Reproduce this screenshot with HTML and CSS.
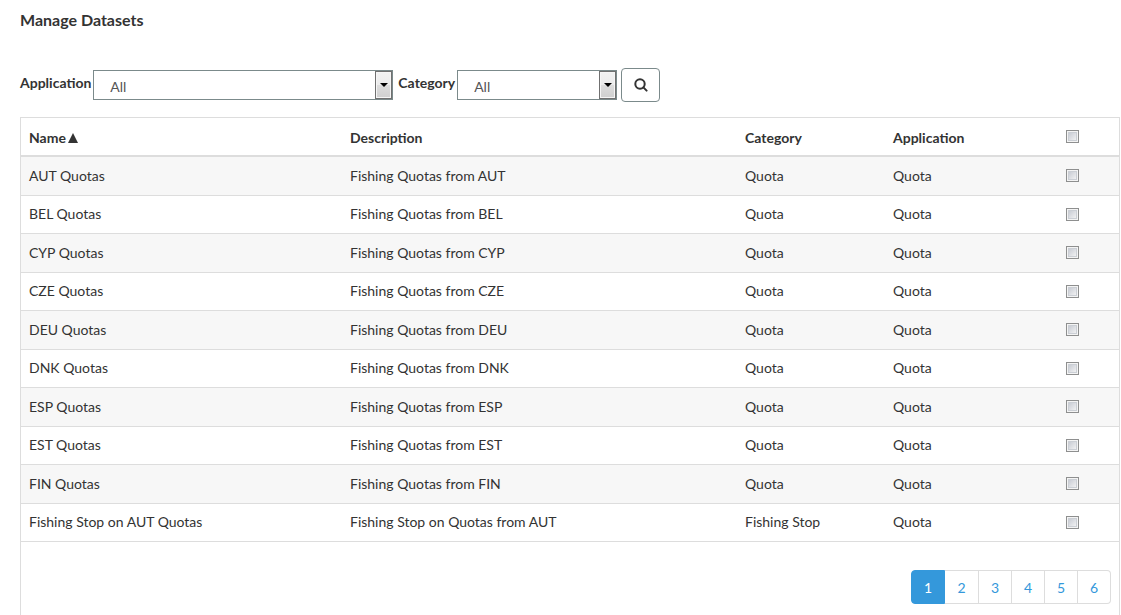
FILE: index.html
```html
<!DOCTYPE html>
<html lang="en">
<head>
<meta charset="utf-8">
<title>Manage Datasets</title>
<link rel="stylesheet" href="styles.css">
</head>
<body>
<main class="page">
  <h1 class="title">Manage Datasets</h1>
  <form class="filters">
    <label class="filter-label" for="application">Application</label>
    <span class="picker picker-wide"><select id="application"><option>All</option></select></span>
    <label class="filter-label filter-next" for="category">Category</label>
    <span class="picker"><select id="category"><option>All</option></select></span>
    <button class="search" type="button" aria-label="Search">
      <svg viewBox="0 0 14 14" width="14" height="14" aria-hidden="true"><circle cx="6" cy="6" r="4.7"/><path d="M9.4 9.4L12.6 12.6"/></svg>
    </button>
  </form>
  <section class="panel">
    <table class="datasets">
      <colgroup><col class="col-name"><col class="col-description"><col class="col-category"><col class="col-application"><col class="col-check"></colgroup>
      <thead>
        <tr><th>Name<svg class="sort" viewBox="0 0 10 10" width="10" height="10" aria-hidden="true"><path d="M5 0L10 10H0z"/></svg></th><th>Description</th><th>Category</th><th>Application</th><th class="check"><input type="checkbox" aria-label="Select all"></th></tr>
      </thead>
      <tbody>
        <tr><td>AUT Quotas</td><td>Fishing Quotas from AUT</td><td>Quota</td><td>Quota</td><td class="check"><input type="checkbox" aria-label="Select AUT Quotas"></td></tr>
        <tr><td>BEL Quotas</td><td>Fishing Quotas from BEL</td><td>Quota</td><td>Quota</td><td class="check"><input type="checkbox" aria-label="Select BEL Quotas"></td></tr>
        <tr><td>CYP Quotas</td><td>Fishing Quotas from CYP</td><td>Quota</td><td>Quota</td><td class="check"><input type="checkbox" aria-label="Select CYP Quotas"></td></tr>
        <tr><td>CZE Quotas</td><td>Fishing Quotas from CZE</td><td>Quota</td><td>Quota</td><td class="check"><input type="checkbox" aria-label="Select CZE Quotas"></td></tr>
        <tr><td>DEU Quotas</td><td>Fishing Quotas from DEU</td><td>Quota</td><td>Quota</td><td class="check"><input type="checkbox" aria-label="Select DEU Quotas"></td></tr>
        <tr><td>DNK Quotas</td><td>Fishing Quotas from DNK</td><td>Quota</td><td>Quota</td><td class="check"><input type="checkbox" aria-label="Select DNK Quotas"></td></tr>
        <tr><td>ESP Quotas</td><td>Fishing Quotas from ESP</td><td>Quota</td><td>Quota</td><td class="check"><input type="checkbox" aria-label="Select ESP Quotas"></td></tr>
        <tr><td>EST Quotas</td><td>Fishing Quotas from EST</td><td>Quota</td><td>Quota</td><td class="check"><input type="checkbox" aria-label="Select EST Quotas"></td></tr>
        <tr><td>FIN Quotas</td><td>Fishing Quotas from FIN</td><td>Quota</td><td>Quota</td><td class="check"><input type="checkbox" aria-label="Select FIN Quotas"></td></tr>
        <tr><td>Fishing Stop on AUT Quotas</td><td>Fishing Stop on Quotas from AUT</td><td>Fishing Stop</td><td>Quota</td><td class="check"><input type="checkbox" aria-label="Select Fishing Stop on AUT Quotas"></td></tr>
      </tbody>
    </table>
    <nav class="pagination" aria-label="Pages">
      <a class="current" href="#1" aria-current="page">1</a><a href="#2">2</a><a href="#3">3</a><a href="#4">4</a><a href="#5">5</a><a href="#6">6</a>
    </nav>
  </section>
</main>
</body>
</html>
```
FILE: styles.css
```css
*,
*::before {
  box-sizing: border-box;
}

body {
  margin: 0;
  background: #fff;
  color: #333;
  font: 14px/20px Lato, "Open Sans", sans-serif;
}

.page {
  display: flex;
  flex-direction: column;
  min-height: 100vh;
  padding: 10px 1px 0 20px;
}

.title {
  margin: 0 0 38px;
  font-size: 16px;
  line-height: 20px;
  font-weight: 700;
}

.filters {
  display: flex;
  align-items: center;
  margin-bottom: 15px;
}

.filter-label {
  padding: 0 2px 4px 0;
  font-weight: 700;
}

.filter-next { margin-left: 5px; }

.picker {
  position: relative;
  width: 160px;
  height: 30px;
}

.picker-wide { width: 300px; }

.picker select {
  appearance: none;
  width: 100%;
  height: 100%;
  margin: 0;
  padding: 4px 24px 0 16px;
  border: 1px solid #7b8a8b;
  border-radius: 0;
  background: #fff;
  color: #555;
  font: inherit;
}

.picker::before {
  content: "";
  position: absolute;
  top: 1px;
  right: 1px;
  width: 17px;
  height: 28px;
  border: 1px solid #707070;
  background: linear-gradient(#f2f2f2, #ebebeb 50%, #dddddd 50%, #cfcfcf);
  box-shadow: inset 0 0 0 1px #f5f5f5;
  pointer-events: none;
}

.picker::after {
  content: "";
  position: absolute;
  top: 13px;
  right: 5px;
  border: solid transparent;
  border-width: 4px 4px 0;
  border-top-color: #000;
  pointer-events: none;
}

.search {
  display: flex;
  align-items: center;
  justify-content: center;
  width: 39px;
  height: 34px;
  margin: 0 0 0 4px;
  padding: 0 0 0 1px;
  border: 1px solid #7b8a8b;
  border-radius: 4px;
  background: #fff;
}

.search svg {
  fill: none;
  stroke: #333;
  stroke-width: 2;
  stroke-linecap: round;
}

.panel {
  flex: 1;
  border: 1px solid #ddd;
  border-bottom: 0;
}

.datasets {
  width: 100%;
  table-layout: fixed;
  border-collapse: separate;
  border-spacing: 0;
}

.col-name { width: 321px; }
.col-category { width: 148px; }
.col-application { width: 140px; }
.col-check { width: 94px; }

.datasets th,
.datasets td {
  height: 38px;
  padding: 0 8px 1px;
  border-bottom: 1px solid #ddd;
  text-align: left;
  vertical-align: middle;
}

.datasets th {
  height: 39px;
  padding: 2px 8px 0;
  border-bottom-width: 2px;
}

.datasets tbody tr:nth-child(odd) { background: #f7f7f7; }

.datasets tbody tr:nth-child(odd) td {
  height: 39px;
  padding-bottom: 0;
}

.datasets .check { text-align: center; }
.datasets th.check { padding-top: 0; }
.datasets tbody tr:nth-child(odd) .check { padding-bottom: 1px; }
.datasets tbody tr:nth-child(even) .check { padding-bottom: 0; }

.sort {
  margin-left: 2px;
  fill: #333;
}

.check input {
  appearance: none;
  display: block;
  width: 13px;
  height: 13px;
  margin: 0 auto;
  padding: 1px;
  border: 1px solid #8e8f8f;
  background: linear-gradient(135deg, #c3c7d0, #f6f6f6) content-box, #f4f4f4;
  box-shadow: inset 0 0 0 1px #f4f4f4, inset 0 0 0 2px #cbcfd5;
}

.check input:checked { background: #3498db content-box; }

.pagination {
  display: flex;
  justify-content: flex-end;
  padding: 28px 8px 10px;
}

.pagination a {
  width: 33px;
  height: 34px;
  border: 1px solid #ddd;
  border-left: 0;
  color: #3498db;
  line-height: 34px;
  text-align: center;
  text-decoration: none;
}

.pagination .current,
.pagination .current + a {
  width: 34px;
}

.pagination .current {
  border: 1px solid #3498db;
  border-radius: 4px 0 0 4px;
  background: #3498db;
  color: #fff;
}

.pagination a:last-child { border-radius: 0 4px 4px 0; }
```
